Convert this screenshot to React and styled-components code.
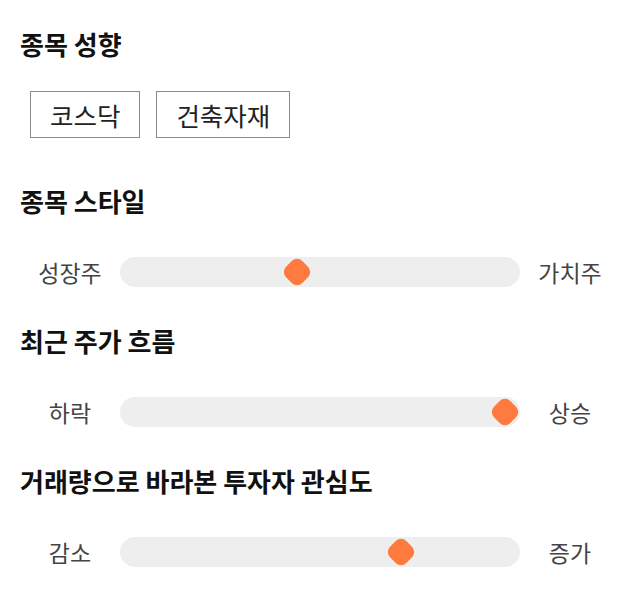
import React from 'react'
import styled, { createGlobalStyle } from 'styled-components'

const GlobalStyle = createGlobalStyle`
  html, body {
    margin: 0;
    padding: 0;
    background: #fff;
  }
  body {
    font-family: "Noto Sans CJK KR", "Noto Sans", sans-serif;
  }
`

const Page = styled.div`
  width: 640px;
  box-sizing: border-box;
  padding: 30px 20px 0;
`

const Section = styled.section`
  display: flex;
  flex-direction: column;
  gap: ${props => props.gap}px;
  margin-bottom: ${props => props.after}px;
`

const Heading = styled.h2`
  margin: -3px 0 3px;
  font-size: 26px;
  line-height: 34px;
  font-weight: 700;
  color: #111;
`

const Chips = styled.div`
  display: flex;
  gap: 16px;
  padding-left: 10px;
`

const Chip = styled.div`
  height: 47px;
  box-sizing: border-box;
  padding: 0 19px;
  display: flex;
  align-items: center;
  border: 1px solid #8a8a8a;
  font-size: 25.5px;
  color: #222;
`

const Row = styled.div`
  display: grid;
  grid-template-columns: 100px 1fr 100px;
  align-items: center;
`

const Label = styled.span`
  text-align: center;
  font-size: 23px;
  line-height: 30px;
  color: #444;
`

const Track = styled.div`
  position: relative;
  height: 30px;
  border-radius: 15px;
  background: #eeeeee;
`

const Thumb = styled.div`
  position: absolute;
  top: 50%;
  width: 23px;
  height: 23px;
  border-radius: 7.5px;
  background: #ff7a3e;
  transform: translate(-50%, -50%) rotate(45deg);
`

const Slider = ({ left, right, value }) => (
  <Row>
    <Label>{left}</Label>
    <Track>
      <Thumb style={{ left: `calc(14px + (100% - 29px) * ${value})` }} />
    </Track>
    <Label>{right}</Label>
  </Row>
)

const sliders = [
  { title: '종목 스타일', left: '성장주', right: '가치주', value: 0.44 },
  { title: '최근 주가 흐름', left: '하락', right: '상승', value: 1 },
  { title: '거래량으로 바라본 투자자 관심도', left: '감소', right: '증가', value: 0.72 },
]

export default function App() {
  return (
    <Page>
      <GlobalStyle />
      <Section gap={27} after={49}>
        <Heading>종목 성향</Heading>
        <Chips>
          <Chip>코스닥</Chip>
          <Chip>건축자재</Chip>
        </Chips>
      </Section>
      {sliders.map(s => (
        <Section key={s.title} gap={36} after={40}>
          <Heading>{s.title}</Heading>
          <Slider left={s.left} right={s.right} value={s.value} />
        </Section>
      ))}
    </Page>
  )
}
